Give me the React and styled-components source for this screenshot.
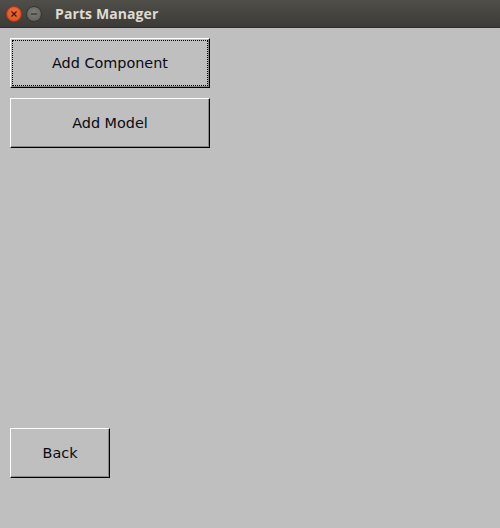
import React from "react";
import styled, { createGlobalStyle } from "styled-components";

const Global = createGlobalStyle`
  html, body { margin: 0; padding: 0; background: #bfbfbf; }
  #root { width: 500px; height: 528px; }
`;

const Window = styled.div`
  width: 500px;
  height: 528px;
  display: flex;
  flex-direction: column;
  background: #bfbfbf;
  overflow: hidden;
`;

const TitleBar = styled.div`
  height: 28px;
  flex: none;
  display: flex;
  align-items: center;
  padding-left: 6px;
  gap: 4px;
  background: linear-gradient(#4f4e49, #3c3b37);
  box-sizing: border-box;
  border-bottom: 1px solid #2f2e2b;
`;

const WinBtn = styled.div`
  width: 16px;
  height: 16px;
  box-sizing: border-box;
  border-radius: 50%;
  background: ${(p) => (p.$close ? "radial-gradient(circle at 50% 40%, #f4703d, #e0481a)" : "radial-gradient(circle at 50% 40%, #7d7c77, #5e5d58)")};
  border: 1px solid ${(p) => (p.$close ? "#a93614" : "#34332f")};
  display: flex;
  align-items: center;
  justify-content: center;
`;

const Title = styled.div`
  margin-left: 9px;
  font-family: "Open Sans", "DejaVu Sans", sans-serif;
  font-weight: 700;
  font-size: 14px;
  color: #dfdbd2;
  letter-spacing: 0.1px;
`;

const Content = styled.div`
  flex: 1;
  display: flex;
  flex-direction: column;
  align-items: flex-start;
  padding: 10px 10px 50px 10px;
  gap: 10px;
`;

const Spacer = styled.div`
  flex: 1;
`;

const TkButton = styled.button`
  position: relative;
  width: ${(p) => p.$w}px;
  height: 50px;
  margin: 0;
  padding: 0;
  box-sizing: border-box;
  background: #bfbfbf;
  border-style: solid;
  border-width: 1px;
  border-color: #ffffff #000000 #000000 #ffffff;
  box-shadow: inset -1px -1px 0 #8a8a8a;
  font-family: "DejaVu Sans", sans-serif;
  font-size: 14.4px;
  color: #0a0a14;
  cursor: default;
  outline: none;
  ${(p) =>
    p.$focus &&
    `&::after {
      content: "";
      position: absolute;
      left: 1px; top: 1px; right: 1px; bottom: 1px;
      border: 1px dotted #000;
    }`}
`;

export default function App() {
  return (
    <>
      <Global />
      <Window>
        <TitleBar>
          <WinBtn $close>
            <svg width="8" height="8" viewBox="0 0 8 8">
              <path d="M1.5 1.5 L6.5 6.5 M6.5 1.5 L1.5 6.5" stroke="#3a1a10" strokeWidth="1.3" />
            </svg>
          </WinBtn>
          <WinBtn>
            <svg width="8" height="8" viewBox="0 0 8 8">
              <path d="M1 4 H7" stroke="#3a3935" strokeWidth="1.4" />
            </svg>
          </WinBtn>
          <Title>Parts Manager</Title>
        </TitleBar>
        <Content>
          <TkButton $w={200} $focus>Add Component</TkButton>
          <TkButton $w={200}>Add Model</TkButton>
          <Spacer />
          <TkButton $w={100}>Back</TkButton>
        </Content>
      </Window>
    </>
  );
}
